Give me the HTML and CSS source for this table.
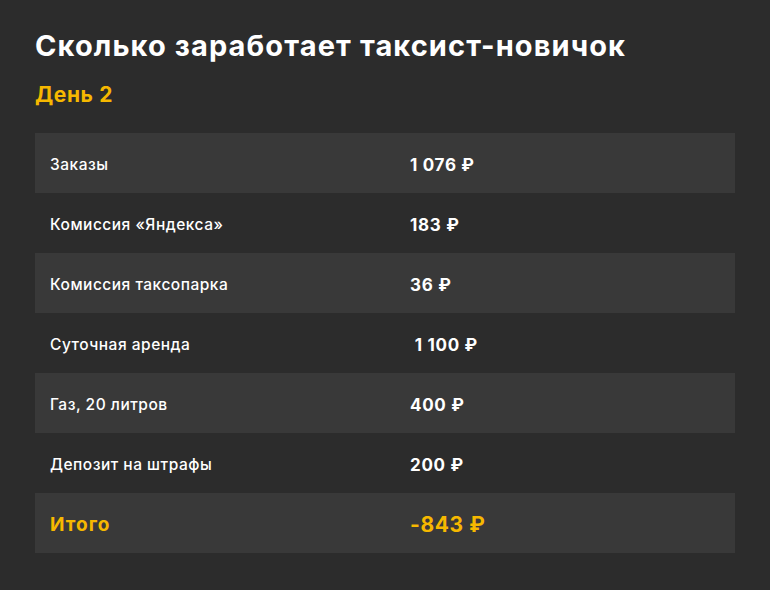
FILE: index.html
```html
<!DOCTYPE html>
<html lang="ru">
<head>
<meta charset="utf-8">
<link rel="stylesheet" href="styles.css">
</head>
<body>
<div class="page">
  <h1 class="title">Сколько заработает таксист-новичок</h1>
  <h2 class="day">День 2</h2>
  <div class="table">
    <div class="row alt"><div class="label">Заказы</div><div class="value">1 076 ₽</div></div>
    <div class="row"><div class="label">Комиссия «Яндекса»</div><div class="value">183 ₽</div></div>
    <div class="row alt"><div class="label">Комиссия таксопарка</div><div class="value">36 ₽</div></div>
    <div class="row"><div class="label">Суточная аренда</div><div class="value">&nbsp;1 100 ₽</div></div>
    <div class="row alt"><div class="label">Газ, 20 литров</div><div class="value">400 ₽</div></div>
    <div class="row"><div class="label">Депозит на штрафы</div><div class="value">200 ₽</div></div>
    <div class="row alt total"><div class="label">Итого</div><div class="value">-843 ₽</div></div>
  </div>
</div>
</body>
</html>
```
FILE: styles.css
```css
html, body {
  margin: 0;
  padding: 0;
  background: #2c2c2c;
}
body {
  width: 770px;
  height: 590px;
  font-family: "Inter", "Open Sans", sans-serif;
  color: #ffffff;
}
.page {
  padding: 28px 35px 0 35px;
}
.title {
  margin: 0;
  font-size: 29px;
  line-height: 36px;
  font-weight: 700;
  letter-spacing: 1.1px;
}
.day {
  margin: 18px 0 0 0;
  font-size: 21px;
  line-height: 26px;
  font-weight: 700;
  letter-spacing: 0.6px;
  color: #f6b800;
}
.table {
  margin-top: 25px;
  display: flex;
  flex-direction: column;
}
.row {
  display: flex;
  align-items: center;
  height: 60px;
  box-sizing: border-box;
  padding-top: 3px;
}
.row.alt {
  background: #393939;
}
.label {
  width: 360px;
  padding-left: 15px;
  font-size: 15.5px;
  font-weight: 500;
  letter-spacing: 0.5px;
}
.value {
  font-size: 17px;
  font-weight: 700;
  letter-spacing: 0.7px;
}
.total .label {
  font-size: 19px;
  font-weight: 700;
  letter-spacing: 1px;
  color: #f6b800;
}
.total .value {
  font-size: 21px;
  font-weight: 700;
  letter-spacing: 0.6px;
  color: #f6b800;
}
```
